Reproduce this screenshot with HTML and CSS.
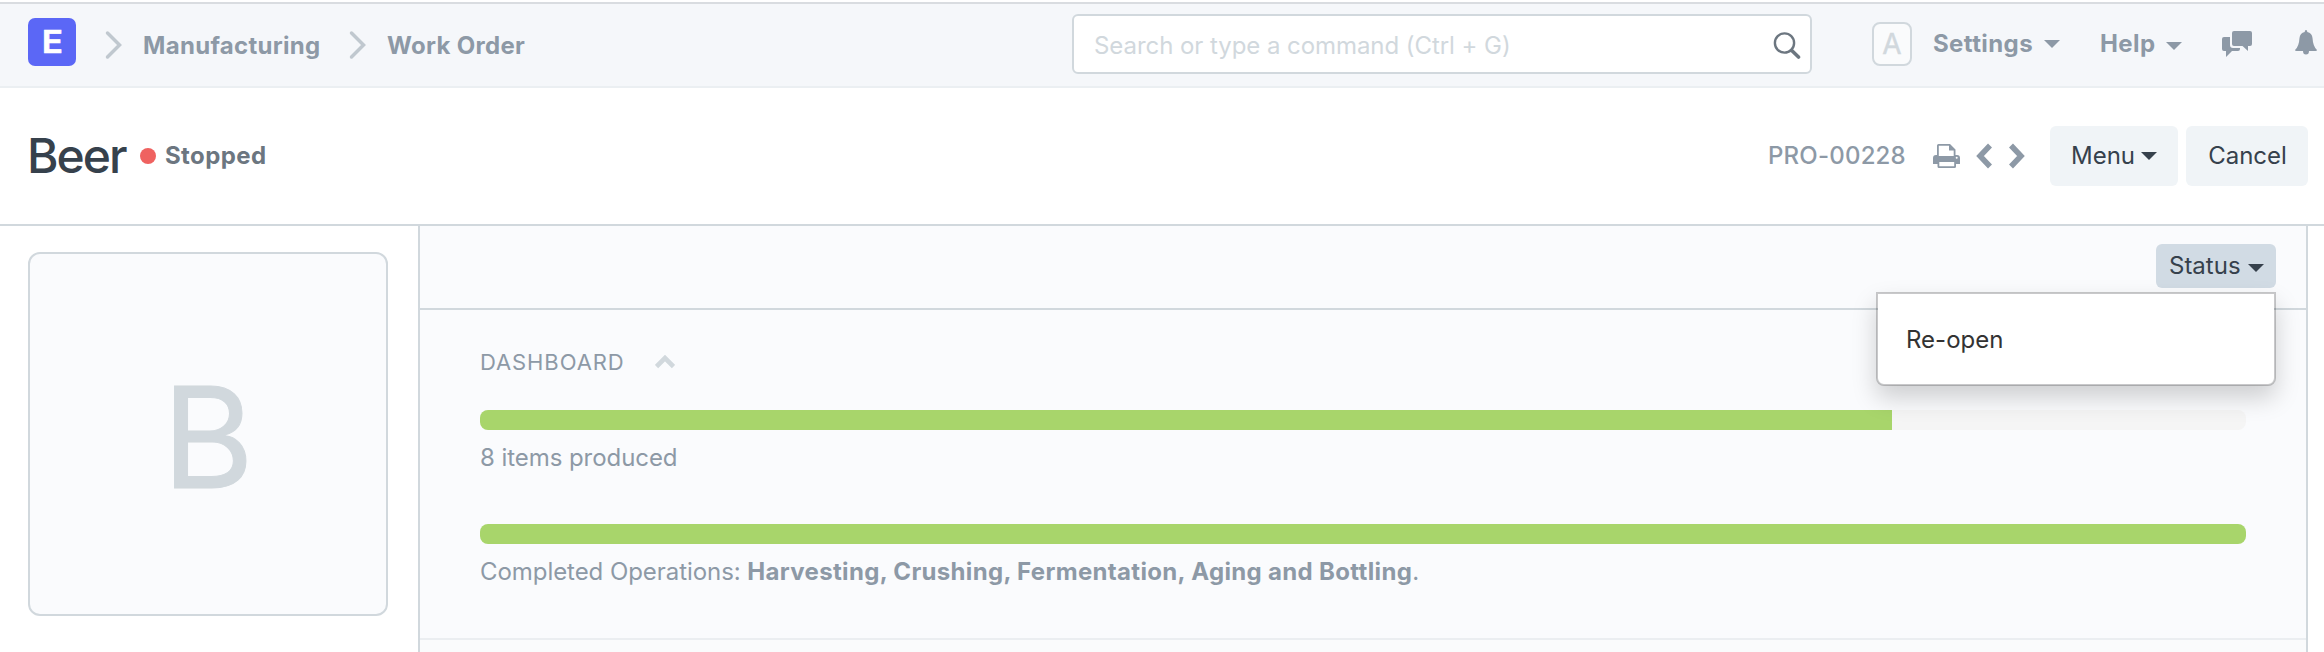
FILE: index.html
```html
<!DOCTYPE html>
<html lang="en">
<head>
<meta charset="utf-8">
<title>Beer - Work Order</title>
<link rel="stylesheet" href="styles.css">
</head>
<body>
<header class="navbar">
  <nav class="crumbs">
    <a class="logo"><span>E</span></a>
    <svg class="crumb-sep" width="18" height="30" viewBox="0 0 18 30"><path d="M2.5 3 14.5 15 2.5 27"/></svg>
    <a class="crumb crumb-module">Manufacturing</a>
    <svg class="crumb-sep" width="18" height="30" viewBox="0 0 18 30"><path d="M2.5 3 14.5 15 2.5 27"/></svg>
    <a class="crumb crumb-doctype">Work Order</a>
  </nav>
  <div class="search">
    <span class="placeholder">Search or type a command (Ctrl + G)</span>
    <svg width="28" height="28" viewBox="0 0 28 28"><circle cx="11.5" cy="12" r="9.6"/><path class="handle" d="M18.5 19.3 25.5 26"/></svg>
  </div>
  <div class="user-nav">
    <span class="avatar">A</span>
    <span class="nav-item settings">Settings</span><i class="caret"></i>
    <span class="nav-item help">Help</span><i class="caret help-caret"></i>
    <svg class="chat" width="30" height="26" viewBox="0 0 30 26"><path d="M12 0H28Q30 0 30 2V13Q30 15 28 15H26V20L20.500 15H12Q10 15 10 13V2Q10 0 12 0Z"/><path d="M2 6H8V14Q8 17 11 17H18V18Q18 20 16 20H10L4 26V20H2Q0 20 0 18V8Q0 6 2 6Z"/></svg>
    <svg class="bell" width="22" height="25" viewBox="0 0 22 25"><path d="M11 0Q12.300 0 12.300 2Q17 2.800 17.500 8Q18 16.500 22 20Q22 21 20.500 21H14Q14 24.500 11 24.500Q8 24.500 8 21H1.500Q0 21 0 20Q4 16.500 4.500 8Q5 2.800 9.700 2Q9.700 0 11 0Z"/></svg>
  </div>
</header>

<section class="page-head">
  <h1>Beer</h1>
  <i class="dot"></i>
  <span class="state">Stopped</span>
  <div class="actions">
    <span class="docname">PRO-00228</span>
    <svg class="printer" width="28" height="24" viewBox="0 0 28 24"><path fill-rule="evenodd" d="M5.500 0H17L22.500 5.500V11H24Q27 11 27 14V20H23V22.500Q23 24 21.500 24H6Q4.500 24 4.500 22.500V20H0V14Q0 11 3 11H4V1.500Q4 0 5.500 0ZM5.800 1.800V12H20.700V6.500H16V1.800ZM6.300 18V22.300H21.200V18ZM23.700 12.800A1 1 0 1 0 23.700 14.800A1 1 0 1 0 23.700 12.800Z"/></svg>
    <svg class="prev" width="17" height="26" viewBox="0 0 17 26"><path d="M14 2.500 4 13 14 23.500"/></svg>
    <svg class="next" width="17" height="26" viewBox="0 0 17 26"><path d="M3 2.500 13 13 3 23.500"/></svg>
    <button class="btn menu">Menu<i class="caret"></i></button>
    <button class="btn cancel">Cancel</button>
  </div>
</section>

<main class="content">
  <aside class="sidebar"><div class="picture">B</div></aside>
  <section class="form">
    <div class="toolbar">
      <div class="dropdown">
        <button class="status">Status<i class="caret"></i></button>
        <div class="dropdown-menu"><a>Re-open</a></div>
      </div>
    </div>
    <div class="dashboard">
      <h2><span>DASHBOARD</span><svg width="20" height="14" viewBox="0 0 20 14"><path d="M1.500 11.500 10 3 18.500 11.500"/></svg></h2>
      <div class="progress"><div class="bar" style="width:79.95%"></div></div>
      <p class="produced">8 items produced</p>
      <div class="progress"><div class="bar" style="width:100%"></div></div>
      <p class="operations">Completed Operations: <b>Harvesting, Crushing, Fermentation, Aging and Bottling</b>.</p>
    </div>
    <div class="next-section"></div>
  </section>
</main>
</body>
</html>
```
FILE: styles.css
```css
* { box-sizing: border-box; }
body {
  margin: 0;
  width: 2324px;
  height: 652px;
  overflow: hidden;
  background: #fff;
  color: #36414c;
  font: 24px/34px Inter, "Liberation Sans", sans-serif;
}
h1, h2, p { margin: 0; font-weight: 400; }
svg { display: block; flex: none; fill: #8d99a6; }
button { border: 0; font: inherit; color: inherit; }

.caret {
  flex: none;
  border: 8px solid transparent;
  border-top-color: currentColor;
  border-bottom: 0;
}

.navbar {
  display: flex;
  align-items: center;
  height: 86px;
  margin-top: 2px;
  border-top: 2px solid #d9dce0;
  border-bottom: 2px solid #ebeff2;
  background: #f5f7fa;
  color: #8d99a6;
  white-space: nowrap;
}
.crumbs { display: flex; align-items: center; width: 1072px; padding-left: 28px; }
.logo {
  display: flex;
  justify-content: center;
  width: 48px;
  height: 48px;
  margin: 0 29px 6px 0;
  border-radius: 7px;
  background: #5b67f6;
  color: #fff;
  font-size: 31px;
  font-weight: 600;
  line-height: 47px;
  -webkit-text-stroke: 0.6px #fff;
}
.logo span { transform: scaleX(1.13); }
.crumb-sep { fill: none; stroke: #c0c8cf; stroke-width: 3.5; stroke-linecap: round; }
.crumb { padding-top: 2px; font-weight: 700; letter-spacing: 0.3px; }
.crumb-module { width: 206px; margin-left: 20px; }
.crumb-doctype { margin-left: 20px; }

.search {
  display: flex;
  align-items: center;
  justify-content: space-between;
  width: 740px;
  height: 60px;
  margin-bottom: 2px;
  padding: 2px 9px 0 20px;
  border: 2px solid #d1d8dd;
  border-radius: 6px;
  background: #fff;
  color: #d1d8dd;
}
.placeholder { padding-top: 2px; letter-spacing: -0.06px; }
.search svg { fill: none; stroke: #6c7680; stroke-width: 2.4; }
.search .handle { stroke-width: 3.6; stroke-linecap: round; }

.user-nav { display: flex; align-items: center; margin-bottom: 2px; padding-left: 60px; }
.avatar {
  width: 40px;
  height: 44px;
  border: 2px solid #d1d8dd;
  border-radius: 8px;
  background: #fafbfc;
  color: #d1d8dd;
  font-size: 28px;
  line-height: 40px;
  text-align: center;
  -webkit-text-stroke: 0.4px #d1d8dd;
}
.nav-item { font-weight: 700; letter-spacing: 0.4px; }
.settings { width: 111px; margin-left: 21px; }
.help { width: 66px; margin-left: 40px; }
.help-caret { margin-top: 4px; }
.chat { margin-left: 40px; }
.bell { margin: 0 0 4px 43px; }

.page-head {
  display: flex;
  align-items: center;
  height: 138px;
  padding: 0 16px 0 27px;
  border-bottom: 2px solid #d1d8dd;
}
.page-head h1 { width: 113px; font-size: 48px; font-weight: 500; line-height: 60px; letter-spacing: -2px; }
.dot { width: 16px; height: 16px; border-radius: 50%; background: #ef6260; }
.state { margin-left: 9px; color: #6c7680; font-weight: 700; letter-spacing: 0.4px; }
.actions { display: flex; align-items: center; margin-left: auto; }
.docname { width: 165px; color: #8d99a6; font-weight: 500; letter-spacing: 0.2px; }
.prev { margin-left: 15px; }
.next { margin: 0 25px 0 15px; }
.prev, .next { fill: none; stroke: #8d99a6; stroke-width: 5.5; }
.btn { height: 60px; padding: 0; border-radius: 6px; background: #f0f4f7; }
.menu { display: flex; align-items: center; justify-content: center; gap: 6px; width: 128px; margin-right: 8px; }
.cancel { width: 122px; padding-left: 1px; }

.content { display: flex; height: 426px; }
.sidebar { width: 418px; padding: 26px 30px 0 28px; }
.picture {
  width: 360px;
  height: 364px;
  border: 2px solid #d1d8dd;
  border-radius: 12px;
  background: #fafbfd;
  color: #d1d8dd;
  font-size: 140px;
  line-height: 366px;
  text-align: center;
  -webkit-text-stroke: 1px #d1d8dd;
}
.form {
  width: 1890px;
  border: 2px solid #d1d8dd;
  border-width: 0 2px;
  background: #fafbfd;
}
.toolbar {
  display: flex;
  justify-content: flex-end;
  height: 84px;
  padding: 18px 30px 0;
  border-bottom: 2px solid #d1d8dd;
}
.dropdown { position: relative; height: 44px; }
.status {
  display: flex;
  align-items: center;
  justify-content: space-between;
  width: 120px;
  height: 44px;
  padding: 0 12px 0 13px;
  border-radius: 6px;
  background: #d1dbe4;
}
.status .caret { margin-top: 4px; }
.dropdown-menu {
  position: absolute;
  z-index: 1;
  top: 48px;
  right: 0;
  width: 400px;
  height: 94px;
  padding: 29px 28px 0;
  border: 2px solid rgba(0, 0, 0, 0.2);
  border-radius: 0 0 8px 8px;
  background: #fff;
  background-clip: padding-box;
  box-shadow: 0 12px 24px rgba(0, 0, 0, 0.175);
  color: #333;
}
.dashboard {
  height: 330px;
  padding: 36px 60px 0;
  border-bottom: 2px solid #ebeef1;
  color: #8d99a6;
}
.dashboard h2 { display: flex; align-items: center; height: 32px; margin-bottom: 32px; font-size: 22px; letter-spacing: 0.9px; }
.dashboard h2 span { width: 175px; }
.dashboard h2 svg { fill: none; stroke: #d1d8dd; stroke-width: 4.6; }
.progress { height: 20px; overflow: hidden; border-radius: 8px; background: #f5f5f5; }
.bar { height: 100%; background: #a8d56b; }
.produced { margin: 11px 0 49px; letter-spacing: -0.06px; }
.operations { margin-top: 11px; letter-spacing: -0.06px; }
.operations b { letter-spacing: 0.33px; }
.next-section { height: 12px; background: #fafbfc; }
```
